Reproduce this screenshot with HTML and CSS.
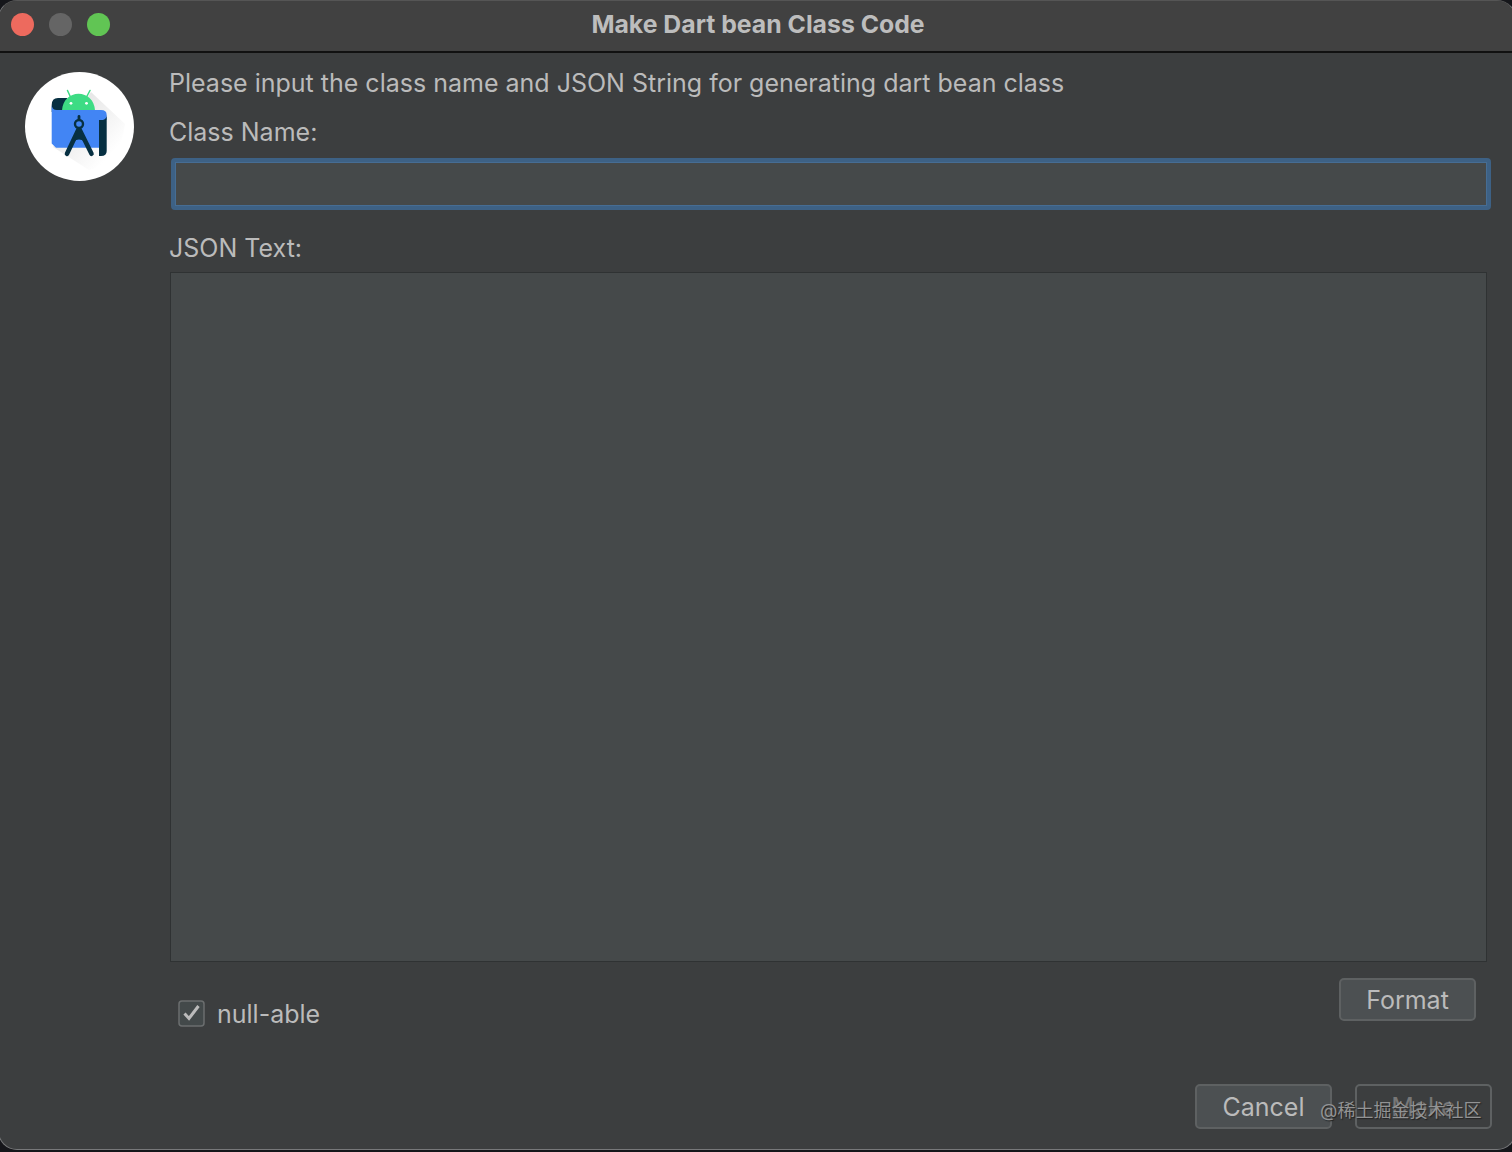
FILE: index.html
```
<!DOCTYPE html>
<html lang="en">

<head>
  <meta charset="UTF-8">
  <meta name="viewport" content="width=device-width, initial-scale=1.0">
  <title>Make Dart bean Class Code</title>
  <link rel="stylesheet" href="styles.css">
</head>

<body>
  <div class="window">
    <header class="titlebar">
      <div class="lights">
        <span class="light close"></span>
        <span class="light minimize"></span>
        <span class="light zoom"></span>
      </div>
      <h1>Make Dart bean Class Code</h1>
    </header>
    <main class="content">
      <svg class="logo" width="110" height="110" viewBox="0 0 110 110">
        <defs>
          <linearGradient id="shade" x1="0" y1="0" x2="1" y2="1">
            <stop offset="0.2" stop-color="#d8d8d8" />
            <stop offset="0.8" stop-color="#ffffff" />
          </linearGradient>
        </defs>
        <circle cx="54.500" cy="54.500" r="54.500" fill="#fff" />
        <path d="M66 20L100 52Q96 90 64 98L28 75Z" fill="url(#shade)" opacity="0.7" />
        <path d="M42 39V26H33Q26.700 26 26.700 33V40Z" fill="#073042" />
        <path d="M37 38.500C37.500 28 45 21.700 53.500 21.700S69.500 28 70 38.500Z" fill="#3ddc84" />
        <path d="M45.500 25L42.500 18.500M61.500 25L65 18.500" stroke="#3ddc84" stroke-width="1.500" stroke-linecap="round" />
        <circle cx="46" cy="31.300" r="1.400" fill="#fff" />
        <circle cx="61.500" cy="31.300" r="1.400" fill="#fff" />
        <path d="M26.700 33Q27 38 32 38H76Q81.700 38 81.700 43V48H74V75.700H31L26.700 71.500Z" fill="#4285f4" />
        <path d="M74 48H78Q81.700 47 81.700 43V79Q81.700 84 76 84H74Z" fill="#073042" />
        <path d="M54 44.500V47" stroke="#073042" stroke-width="2.800" stroke-linecap="round" />
        <circle cx="54" cy="52" r="4" fill="none" stroke="#073042" stroke-width="2.400" />
        <path d="M53 58.500L42 81.800M55 58.500L66.500 81.800" stroke="#073042" stroke-width="4.600" stroke-linecap="round" />
        <path d="M54 56L48.500 69.500Q54 65.500 59.500 69.500Z" fill="#073042" />
      </svg>
      <form class="form">
        <p class="intro">Please input the class name and JSON String for generating dart bean class</p>
        <label class="name-label" for="className">Class Name:</label>
        <input type="text" id="className" class="class-name">
        <label class="json-label" for="jsonText">JSON Text:</label>
        <textarea id="jsonText" class="json-text"></textarea>
        <div class="options">
          <label class="nullable">
            <svg class="checkbox" width="27" height="27" viewBox="0 0 27 27">
              <rect x="1" y="1" width="25" height="25" rx="3" fill="#43494a" stroke="#6b6e6f" stroke-width="1.500" />
              <path d="M6.500 13.500L11 18.500L20.500 6" fill="none" stroke="#bbb" stroke-width="3" />
            </svg>
            <span>null-able</span>
          </label>
          <button type="button" class="button format">Format</button>
        </div>
      </form>
    </main>
    <footer class="actions">
      <button type="button" class="button">Cancel</button>
      <button type="button" class="button" disabled>Make</button>
    </footer>
  </div>
  <div class="watermark">@稀土掘金技术社区</div>
</body>

</html>
```
FILE: styles.css
```
* {
  box-sizing: border-box;
}

body {
  margin: 0;
  height: 1152px;
  overflow: hidden;
  background: #15161a;
  color: #bbb;
  font-family: Inter, "Noto Sans CJK SC", sans-serif;
  font-size: 25px;
}

.window {
  width: 1518px;
  height: 1150px;
  margin-left: -2px;
  padding: 0 3px 0 1px;
  border: 1px solid #77787a;
  border-top-color: #555;
  border-radius: 19px;
  background: #3c3e3f;
  overflow: hidden;
}

.titlebar {
  display: grid;
  grid-template-columns: 120px 1fr 116px;
  align-items: center;
  height: 52px;
  margin: 0 -3px 0 -1px;
  padding: 0 3px 5px 1px;
  background: #414141;
  border-bottom: 2px solid #111;
}

.lights {
  display: flex;
  gap: 15px;
  padding: 2px 0 0 11px;
}

.light {
  width: 23px;
  height: 23px;
  border-radius: 50%;
}

.close {
  background: #ed6a5e;
}

.minimize {
  background: #656565;
}

.zoom {
  background: #61c554;
}

h1 {
  margin: 0;
  font-size: 24.8px;
  font-weight: 700;
  line-height: 30px;
  text-align: center;
  color: #bdbdbd;
}

.content {
  display: flex;
  padding: 0 21px 0 25px;
}

.logo {
  margin: 19px 34px 0 0;
}

.form {
  display: flex;
  flex: 1;
  flex-direction: column;
  padding-top: 15px;
}

.intro {
  margin: 0;
  line-height: 30px;
}

.name-label,
.json-label {
  align-self: flex-start;
  line-height: 30px;
}

.name-label {
  margin-top: 19px;
}

.json-label {
  margin-top: 23px;
}

.class-name {
  height: 52px;
  margin: 11px 0 0 2px;
  border: 4px solid #3d6185;
  border-radius: 4px;
  outline: 1px solid #466d94;
  outline-offset: -5px;
  background: #45494a;
}

.json-text {
  height: 690px;
  margin: 9px 4px 0 1px;
  border: 1px solid #2f3233;
  background: #45494a;
  resize: none;
}

.options {
  display: flex;
  justify-content: space-between;
  padding: 16px 15px 0 9px;
}

.nullable {
  display: flex;
  align-items: center;
  gap: 12px;
  margin-top: 21px;
  height: 30px;
}

.checkbox {
  margin-bottom: 2px;
}

.button {
  width: 137px;
  height: 45px;
  padding: 0;
  border: 2px solid #5e6162;
  border-radius: 5px;
  background: #4c5052;
  color: #bbb;
  font: inherit;
}

.button:disabled {
  background: transparent;
  color: #777;
}

.format {
  height: 43px;
}

.actions {
  display: flex;
  justify-content: flex-end;
  gap: 23px;
  padding: 55px 20px 0 0;
}

.watermark {
  position: absolute;
  left: 1320px;
  top: 1098px;
  font-size: 18px;
  line-height: 25px;
  color: #929394;
  text-shadow: 1px 1px 1px #222;
}
```
